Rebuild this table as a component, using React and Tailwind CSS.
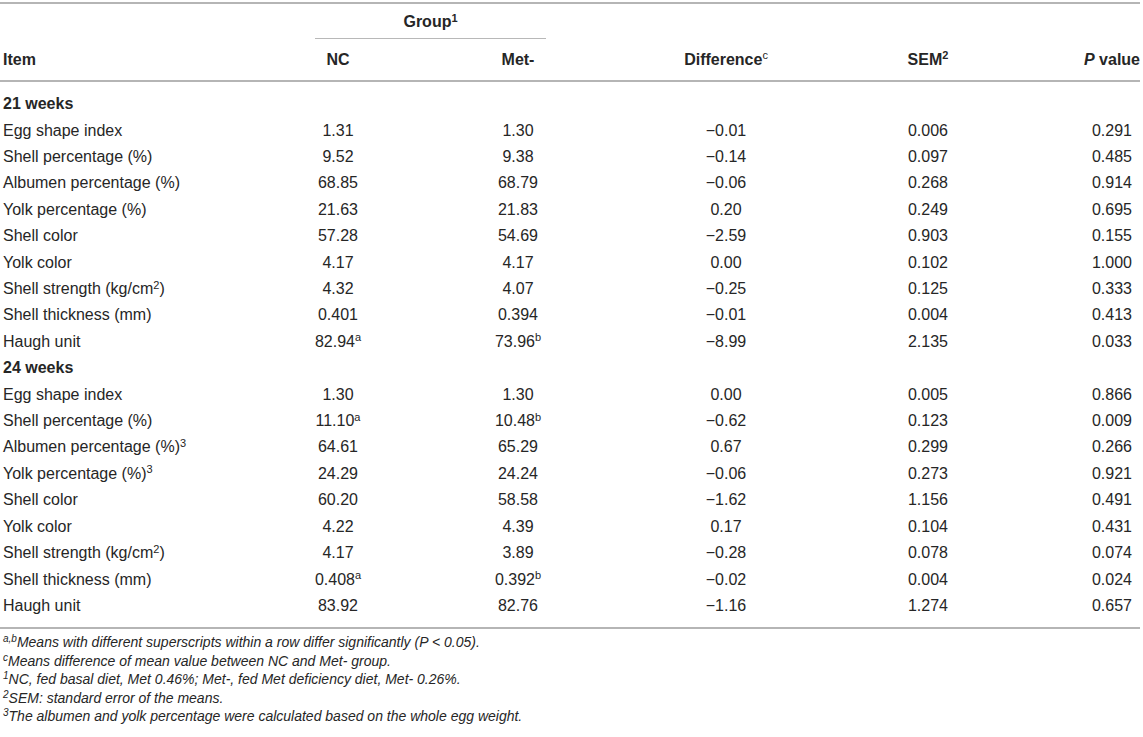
import React from "react";

const cols = "grid grid-cols-[250px_176px_184px_232px_172px_1fr] items-center";

const rows21 = [
  ["Egg shape index", "1.31", "1.30", "−0.01", "0.006", "0.291"],
  ["Shell percentage (%)", "9.52", "9.38", "−0.14", "0.097", "0.485"],
  ["Albumen percentage (%)", "68.85", "68.79", "−0.06", "0.268", "0.914"],
  ["Yolk percentage (%)", "21.63", "21.83", "0.20", "0.249", "0.695"],
  ["Shell color", "57.28", "54.69", "−2.59", "0.903", "0.155"],
  ["Yolk color", "4.17", "4.17", "0.00", "0.102", "1.000"],
  ["Shell strength (kg/cm|2|)", "4.32", "4.07", "−0.25", "0.125", "0.333"],
  ["Shell thickness (mm)", "0.401", "0.394", "−0.01", "0.004", "0.413"],
  ["Haugh unit", "82.94|a", "73.96|b", "−8.99", "2.135", "0.033"],
];

const rows24 = [
  ["Egg shape index", "1.30", "1.30", "0.00", "0.005", "0.866"],
  ["Shell percentage (%)", "11.10|a", "10.48|b", "−0.62", "0.123", "0.009"],
  ["Albumen percentage (%)|3", "64.61", "65.29", "0.67", "0.299", "0.266"],
  ["Yolk percentage (%)|3", "24.29", "24.24", "−0.06", "0.273", "0.921"],
  ["Shell color", "60.20", "58.58", "−1.62", "1.156", "0.491"],
  ["Yolk color", "4.22", "4.39", "0.17", "0.104", "0.431"],
  ["Shell strength (kg/cm|2|)", "4.17", "3.89", "−0.28", "0.078", "0.074"],
  ["Shell thickness (mm)", "0.408|a", "0.392|b", "−0.02", "0.004", "0.024"],
  ["Haugh unit", "83.92", "82.76", "−1.16", "1.274", "0.657"],
];

// "text|sup|rest" -> text with superscript
const Cell = ({ value }) => {
  const [a, sup, rest] = value.split("|");
  return (
    <>
      {a}
      {sup ? <sup className="text-[11px]">{sup}</sup> : null}
      {rest}
    </>
  );
};

const Row = ({ row }) => (
  <div className={cols + " h-[26.42px]"}>
    <div className="pl-[3px]">
      <Cell value={row[0]} />
    </div>
    {row.slice(1, 5).map((v, i) => (
      <div key={i} className="text-center">
        <Cell value={v} />
      </div>
    ))}
    <div className="text-right pr-[8px]">{row[5]}</div>
  </div>
);

const Section = ({ title, rows }) => (
  <>
    <div className="h-[26.42px] flex items-center pl-[3px] font-bold">{title}</div>
    {rows.map((r, i) => (
      <Row key={i} row={r} />
    ))}
  </>
);

export default function App() {
  return (
    <div className="w-[1143px] h-[737px] bg-white text-[#262626] font-['Liberation_Sans',Arial,sans-serif] text-[16px] overflow-hidden">
      <div className="w-[1140px] pt-[2px]">
        {/* header */}
        <div className="border-t-2 border-[#b5b5b5] border-b-2">
          <div className="flex pt-[6px]">
            <div className="ml-[315px] w-[231px] text-center font-bold pb-[4px] border-b border-[#b8b8b8]">
              Group<sup className="text-[11px]">1</sup>
            </div>
          </div>
          <div className={cols + " h-[41px] font-bold"}>
            <div className="pl-[3px]">Item</div>
            <div className="text-center">NC</div>
            <div className="text-center">Met-</div>
            <div className="text-center">
              Difference<sup className="text-[11px] font-normal">c</sup>
            </div>
            <div className="text-center">
              SEM<sup className="text-[11px]">2</sup>
            </div>
            <div className="text-right whitespace-nowrap">
              <i>P</i> value
            </div>
          </div>
        </div>

        {/* body */}
        <div className="pt-[9px] pb-[8px] border-b-2 border-[#b5b5b5]">
          <Section title="21 weeks" rows={rows21} />
          <Section title="24 weeks" rows={rows24} />
        </div>

        {/* footnotes */}
        <div className="pt-[4px] pl-[3px] italic text-[14px] leading-[18.5px]">
          <p>
            <sup className="text-[10px]">a,b</sup>Means with different superscripts within a row differ
            significantly (P {"<"} 0.05).
          </p>
          <p>
            <sup className="text-[10px]">c</sup>Means difference of mean value between NC and Met- group.
          </p>
          <p>
            <sup className="text-[10px]">1</sup>NC, fed basal diet, Met 0.46%; Met-, fed Met deficiency
            diet, Met- 0.26%.
          </p>
          <p>
            <sup className="text-[10px]">2</sup>SEM: standard error of the means.
          </p>
          <p>
            <sup className="text-[10px]">3</sup>The albumen and yolk percentage were calculated based on
            the whole egg weight.
          </p>
        </div>
      </div>
    </div>
  );
}
